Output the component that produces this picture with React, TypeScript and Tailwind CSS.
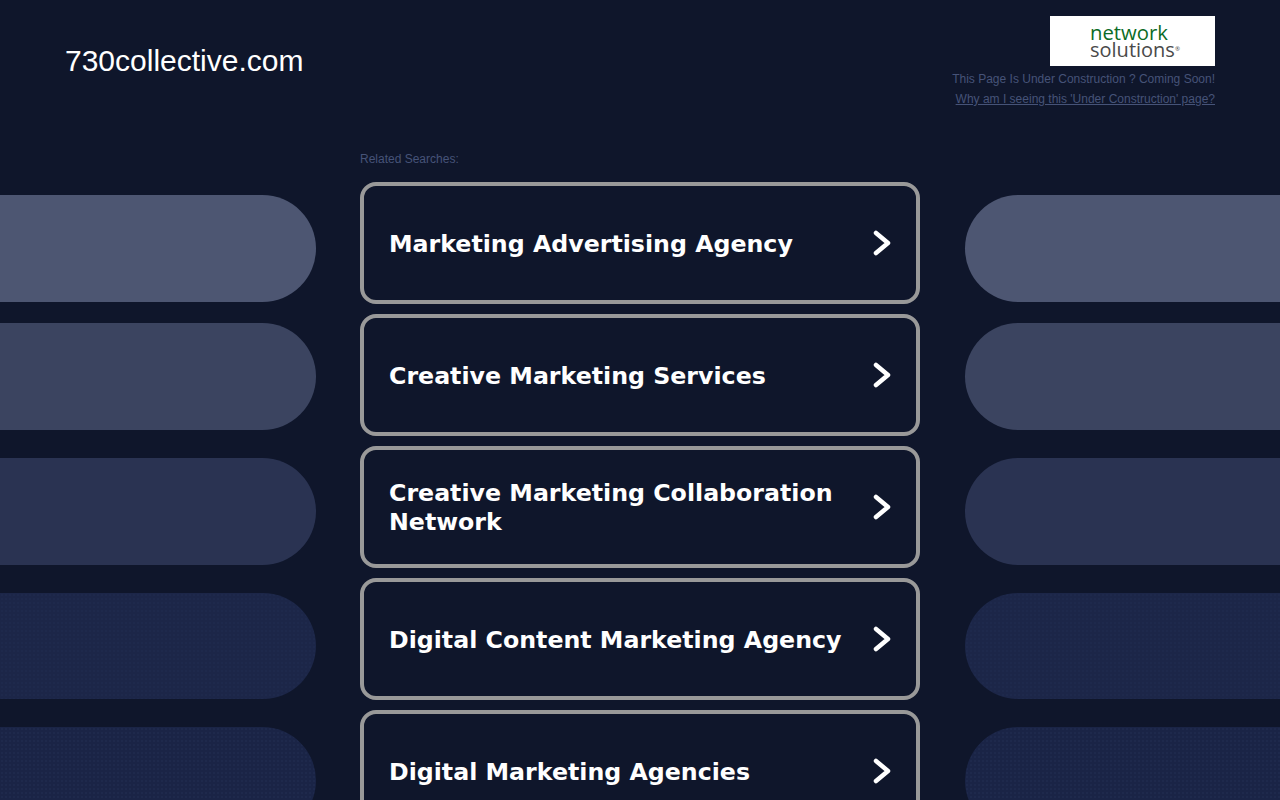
const items = [
  "Marketing Advertising Agency",
  "Creative Marketing Services",
  "Creative Marketing Collaboration Network",
  "Digital Content Marketing Agency",
  "Digital Marketing Agencies",
];

function Pills({ side }: { side: "left" | "right" }) {
  const round = side === "left" ? "rounded-r-[54px]" : "rounded-l-[54px]";
  const dots = "bg-[radial-gradient(#1e294c_1px,transparent_1px)] bg-[length:4px_4px]";
  return (
    <div className="flex flex-col pt-[57px]">
      <div className={`h-[107px] shrink-0 bg-[#4d5672] ${round}`} />
      <div className={`mt-[21px] h-[107px] shrink-0 bg-[#3b4460] ${round}`} />
      <div className={`mt-[28px] h-[107px] shrink-0 bg-[#2a3352] ${round}`} />
      <div className={`mt-[28px] h-[106px] shrink-0 bg-[#1c2648] ${dots} ${round}`} />
      <div className={`mt-[28px] h-[107px] shrink-0 bg-[#1a2446] ${dots} ${round}`} />
    </div>
  );
}

export default function App() {
  return (
    <div className="h-screen overflow-hidden bg-[#0f162b] font-['Liberation_Sans',Arial,sans-serif]">
      <header className="flex h-[138px] justify-between pl-[65px] pr-[65px] pt-[16px]">
        <h1 className="mt-[25px] text-[30px] leading-[40px] font-normal text-white">730collective.com</h1>
        <div className="flex flex-col items-end">
          <div className="flex h-[50px] w-[165px] flex-col items-start justify-center bg-white pl-[40px] font-['Open_Sans',sans-serif] leading-none font-normal">
            <span className="relative -top-[1px] text-[20.3px] leading-[16px] text-[#0b6b26]">network</span>
            <span className="mt-[1px] text-[20px] leading-[16px] text-[#4a4a4a]">solutions<span className="align-top text-[6px] leading-[14px]">®</span></span>
          </div>
          <p className="mt-[5px] text-[12px] leading-[16px] text-[#465378]">This Page Is Under Construction ? Coming Soon!</p>
          <a className="mt-[4px] text-[12px] leading-[16px] text-[#465378] underline">Why am I seeing this 'Under Construction' page?</a>
        </div>
      </header>
      <div className="flex">
        <div className="w-[316px] shrink-0"><Pills side="left" /></div>
        <main className="ml-[44px] w-[560px] shrink-0">
          <p className="mb-[15px] mt-[14px] text-[12px] leading-[15px] text-[#465378]">Related Searches:</p>
          <div className="flex flex-col gap-[10px]">
            {items.map((t) => (
              <div key={t} className="flex h-[122px] shrink-0 items-center justify-between rounded-[16px] border-4 border-[#999999] pl-[25px] pr-[25px]">
                <span className="relative top-[1px] max-w-[470px] font-['DejaVu_Sans',sans-serif] text-[23.7px] leading-[29px] font-bold text-white">{t}</span>
                <svg width="18" height="26" viewBox="0 0 18 26" fill="none" stroke="white" strokeWidth="4.5" strokeLinecap="round" strokeLinejoin="round" className="shrink-0">
                  <path d="M3 3 L15 13 L3 23" />
                </svg>
              </div>
            ))}
          </div>
        </main>
        <div className="ml-[45px] flex-1"><Pills side="right" /></div>
      </div>
    </div>
  );
}
